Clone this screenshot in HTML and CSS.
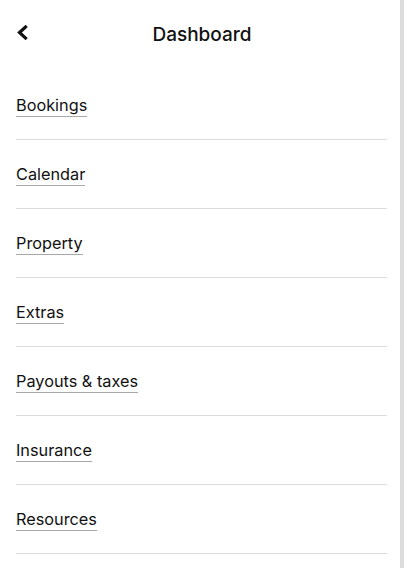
FILE: index.html
```html
<!DOCTYPE html>
<html>

<head>
  <meta charset="UTF-8">
  <meta name="viewport" content="width=device-width, initial-scale=1.0">
  <title>Dashboard</title>
  <link rel="stylesheet" href="styles.css">
</head>

<body>
  <div class="page">
    <header class="topbar">
      <a class="back" href="#" aria-label="Back">
        <svg width="13" height="15" viewBox="0 0 13 15">
          <path d="M9.5 2 L3.5 7.5 L9.5 13" fill="none" stroke="#111" stroke-width="3.2" stroke-linecap="square" />
        </svg>
      </a>
      <h1 class="title">Dashboard</h1>
    </header>

    <ul class="menu">
      <li class="menu-item"><a href="#">Bookings</a></li>
      <li class="menu-item"><a href="#">Calendar</a></li>
      <li class="menu-item"><a href="#">Property</a></li>
      <li class="menu-item"><a href="#">Extras</a></li>
      <li class="menu-item"><a href="#">Payouts &amp; taxes</a></li>
      <li class="menu-item"><a href="#">Insurance</a></li>
      <li class="menu-item"><a href="#">Resources</a></li>
    </ul>
  </div>
  <div class="scrollbar"></div>
</body>

</html>
```

FILE: styles.css
```css
body {
  margin: 0;
  background: #fff;
  font-family: Inter, "Noto Sans", sans-serif;
  color: #111;
  overflow: hidden;
}

.page {
  width: 404px;
  box-sizing: border-box;
  padding: 0 17px 0 16px;
}

.topbar {
  height: 71px;
  display: flex;
  justify-content: center;
  position: relative;
}

.back {
  position: absolute;
  left: 0;
  top: 25px;
  display: flex;
}

.title {
  margin: 23px 0 0;
  font-size: 19px;
  font-weight: 500;
  line-height: 24px;
  padding-left: 1px;
}

.menu {
  list-style: none;
  margin: 0;
  padding: 0;
}

.menu-item {
  height: 68px;
  border-bottom: 1px solid #dcdcdc;
  display: flex;
  align-items: center;
}

.menu-item a {
  color: #111;
  font-size: 16.3px;
  text-decoration: none;
  border-bottom: 1px solid #a8a8a8;
  line-height: 20px;
  padding-bottom: 1px;
  margin-top: 2px;
}

.scrollbar {
  position: fixed;
  top: 0;
  right: 0;
  width: 4px;
  height: 568px;
  background: #dcdcdc;
}
```
